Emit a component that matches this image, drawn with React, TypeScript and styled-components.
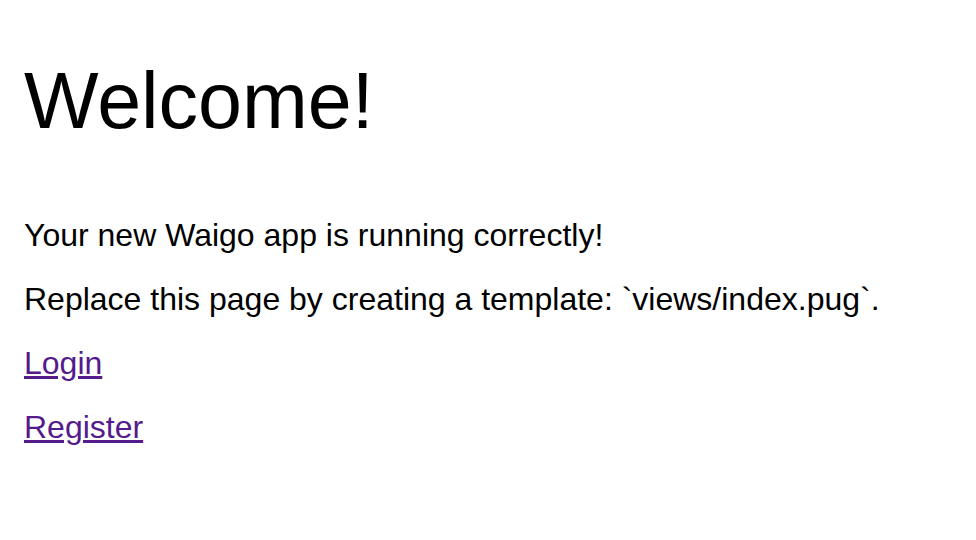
import { createGlobalStyle, styled } from "styled-components";

const GlobalStyle = createGlobalStyle`
  html, body {
    margin: 0;
    padding: 0;
    background: #ffffff;
  }
  body {
    font-family: "Liberation Sans", Arial, sans-serif;
    color: #000000;
  }
`;

const Page = styled.div`
  padding: 1px 24px;
`;

const Title = styled.h1`
  font-size: 79px;
  line-height: 90px;
  font-weight: normal;
  margin: 55px 0 71px;
`;

const Text = styled.p`
  font-size: 32px;
  line-height: 36px;
  margin: 28px 0;
`;

const Link = styled.a`
  color: #551a8b;
  text-decoration: underline;
`;

function App() {
  return (
    <>
      <GlobalStyle />
      <Page>
        <Title>Welcome!</Title>
        <Text>Your new Waigo app is running correctly!</Text>
        <Text>Replace this page by creating a template: `views/index.pug`.</Text>
        <Text>
          <Link href="#">Login</Link>
        </Text>
        <Text>
          <Link href="#">Register</Link>
        </Text>
      </Page>
    </>
  );
}

export default App;
